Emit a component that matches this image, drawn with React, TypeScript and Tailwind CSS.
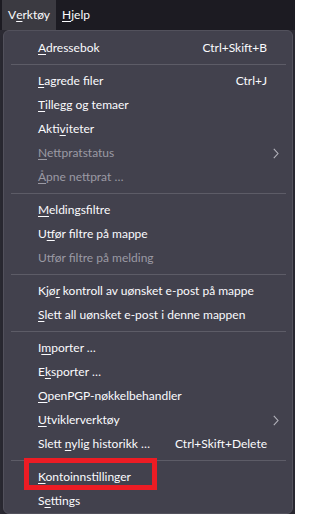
import React from 'react';

type Entry =
  | 'sep'
  | {
      label: string;
      shortcut?: string;
      disabled?: boolean;
      submenu?: boolean;
      marked?: boolean;
    };

// '&' marks the access key, as in a Windows menu definition
const entries: Entry[] = [
  { label: '&Adressebok', shortcut: 'Ctrl+Skift+B' },
  'sep',
  { label: '&Lagrede filer', shortcut: 'Ctrl+J' },
  { label: '&Tillegg og temaer' },
  { label: 'Akti&viteter' },
  { label: '&Nettpratstatus', disabled: true, submenu: true },
  { label: '&Åpne nettprat …', disabled: true },
  'sep',
  { label: '&Meldingsfiltre' },
  { label: 'U&tfør filtre på mappe' },
  { label: 'Utfør filtre på melding', disabled: true },
  'sep',
  { label: 'Kjø&r kontroll av uønsket e-post på mappe' },
  { label: '&Slett all uønsket e-post i denne mappen' },
  'sep',
  { label: 'I&mporter …' },
  { label: 'E&ksporter …' },
  { label: '&OpenPGP-nøkkelbehandler' },
  { label: '&Utviklerverktøy', submenu: true },
  { label: 'Slett &nylig historikk …', shortcut: 'Ctrl+Skift+Delete' },
  'sep',
  { label: '&Kontoinnstillinger', marked: true },
  { label: 'S&ettings' },
];

const AccessLabel = ({ text }: { text: string }) => {
  const i = text.indexOf('&');
  if (i < 0) return <>{text}</>;
  return (
    <>
      {text.slice(0, i)}
      <span className="underline decoration-1 underline-offset-[2px]">{text[i + 1]}</span>
      {text.slice(i + 2)}
    </>
  );
};

const Chevron = () => (
  <svg width="6" height="11" viewBox="0 0 6 11" fill="none" className="text-[#b4b4bc]">
    <path d="M0.8 0.8 L5 5.5 L0.8 10.2" stroke="currentColor" strokeWidth="1.1" />
  </svg>
);

export default function App() {
  return (
    <div className="h-[514px] w-[295px] overflow-hidden bg-[#2b2a33] font-['Segoe_UI','Lato','Liberation_Sans',sans-serif] text-[12px] text-[#fbfbfe] antialiased">
      {/* Menu bar */}
      <div className="flex h-[30px] items-stretch bg-[#1c1b22] pl-[2px]">
        <div className="flex items-center bg-[#3b3a41] px-[6px]">
          <AccessLabel text="V&erktøy" />
        </div>
        <div className="flex items-center px-[6px]">
          <AccessLabel text="&Hjelp" />
        </div>
      </div>

      {/* Dropdown */}
      <div className="ml-[3px] h-[484px] w-[290px] rounded-md border border-[#52515c] bg-[#42414d] pt-[5px] shadow-lg">
        {entries.map((e, i) =>
          e === 'sep' ? (
            <div key={i} className="mr-[6px] ml-[7px] my-[4px] h-px bg-[#5d5c67]" />
          ) : (
            <div
              key={i}
              className={`relative flex h-6 items-center pl-[34px] ${
                e.disabled ? 'text-[#9b9aa4]' : 'text-[#fbfbfe]'
              }`}
            >
              <span className="flex-1 whitespace-nowrap">
                <AccessLabel text={e.label} />
              </span>
              {e.shortcut && <span className="whitespace-nowrap">{e.shortcut}</span>}
              <span className="flex w-[25px] justify-end pr-[13px]">{e.submenu && <Chevron />}</span>
              {e.marked && (
                <div className="absolute top-[-7px] left-[20px] h-[32px] w-[133px] border-[5px] border-[#ec1c24]" />
              )}
            </div>
          ),
        )}
      </div>
    </div>
  );
}
